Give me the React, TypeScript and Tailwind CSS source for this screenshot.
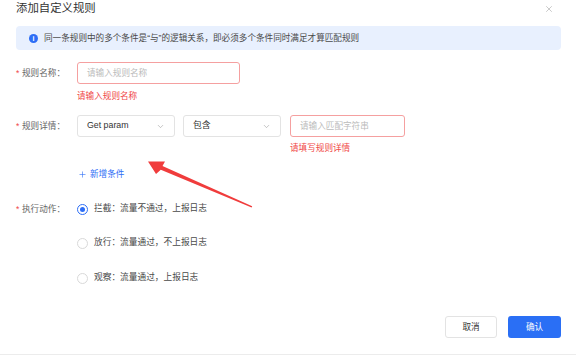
import { ChevronDown, X, Plus } from 'lucide-react';

const FONT = "font-['Liberation_Sans','Noto_Sans_CJK_SC',sans-serif]";

function Label({ text }: { text: string }) {
  return (
    <div className="w-[61px] shrink-0 flex items-center text-[8.6px] text-[#666]">
      <span className="text-[#f04747] mr-[2px] w-[4px]">*</span>
      <span>{text}：</span>
    </div>
  );
}

function Select({ value }: { value: string }) {
  return (
    <div className="w-[98px] h-[22px] border border-[#e3e3e3] rounded-[3px] flex items-center justify-between pl-[9px] pr-[9px] text-[8.8px] text-[#333]">
      <span>{value}</span>
      <ChevronDown className="w-[9px] h-[9px] text-[#999]" strokeWidth={1.5} />
    </div>
  );
}

function Radio({ checked, text }: { checked?: boolean; text: string }) {
  return (
    <div className="flex items-center h-[14px]">
      <span
        className={`w-[11px] h-[11px] rounded-full border flex items-center justify-center ${
          checked ? 'border-[#2d6ef6]' : 'border-[#d9d9d9]'
        }`}
      >
        {checked && <span className="w-[5px] h-[5px] rounded-full bg-[#2d6ef6]" />}
      </span>
      <span className="ml-[6px] text-[8.7px] text-[#4a4a4a]">{text}</span>
    </div>
  );
}

export default function App() {
  return (
    <div className={`w-[576px] h-[356px] bg-white relative overflow-hidden ${FONT}`}>
      <div className="px-4">
        {/* header */}
        <div className="h-[18px] flex items-center justify-between">
          <span className="text-[11.4px] text-[#333]">添加自定义规则</span>
          <X className="w-[10px] h-[10px] text-[#aaa] mr-[6px]" strokeWidth={1.5} />
        </div>

        {/* notice */}
        <div className="mt-[8px] h-[24px] w-[545px] rounded-[4px] bg-[#e8f0fe] flex items-center pl-[13px]">
          <span className="w-[9px] h-[9px] rounded-full bg-[#2d6ef6] text-white text-[7px] leading-[9px] font-bold flex items-center justify-center">
            i
          </span>
          <span className="ml-[6px] text-[8.6px] text-[#4a4a4a]">
            同一条规则中的多个条件是“与”的逻辑关系，即必须多个条件同时满足才算匹配规则
          </span>
        </div>

        {/* rule name */}
        <div className="mt-[12px] flex items-center">
          <Label text="规则名称" />
          <div className="w-[163px] h-[22px] border border-[#f5a0a0] rounded-[3px] flex items-center pl-[9px] text-[8.6px] text-[#bbb]">
            请输入规则名称
          </div>
        </div>
        <div className="mt-[6px] ml-[61px] h-[12px] leading-[12px] text-[8.6px] text-[#f04747]">请输入规则名称</div>

        {/* rule detail */}
        <div className="mt-[13px] flex items-center">
          <Label text="规则详情" />
          <Select value="Get param" />
          <div className="ml-[8px]">
            <Select value="包含" />
          </div>
          <div className="ml-[9px] w-[115px] h-[22px] border border-[#f5a0a0] rounded-[3px] flex items-center pl-[9px] text-[8.6px] text-[#bbb]">
            请输入匹配字符串
          </div>
        </div>
        <div className="mt-[5px] ml-[274px] h-[12px] leading-[12px] text-[8.6px] text-[#f04747]">请填写规则详情</div>

        <div className="mt-[14px] ml-[62px] h-[12px] flex items-center text-[8.6px] text-[#2d6ef6]">
          <Plus className="w-[9px] h-[9px]" strokeWidth={1.6} />
          <span className="ml-[3px]">新增条件</span>
        </div>

        {/* action */}
        <div className="mt-[22px] flex items-center">
          <Label text="执行动作" />
          <Radio checked text="拦截：流量不通过，上报日志" />
        </div>
        <div className="mt-[20px] ml-[61px]">
          <Radio text="放行：流量通过，不上报日志" />
        </div>
        <div className="mt-[21px] ml-[61px]">
          <Radio text="观察：流量通过，上报日志" />
        </div>

        {/* footer */}
        <div className="mt-[31px] flex justify-end gap-[11px] w-[545px]">
          <button className="w-[52px] h-[22px] border border-[#e3e3e3] rounded-[3px] bg-white text-[8.6px] text-[#333]">
            取消
          </button>
          <button className="w-[53px] h-[22px] rounded-[3px] bg-[#2a6ff5] text-[8.6px] text-white">确认</button>
        </div>
      </div>
      <div className="mt-[16px] h-px bg-[#ececec]" />

      {/* annotation arrow */}
      <svg className="absolute left-0 top-0 pointer-events-none" width="576" height="356">
        <polygon
          points="148,161.5 165,161.5 162.5,166 252.2,206.2 251.6,207.4 160.8,169.8 156,174"
          fill="#f03c3c"
        />
      </svg>
    </div>
  );
}
